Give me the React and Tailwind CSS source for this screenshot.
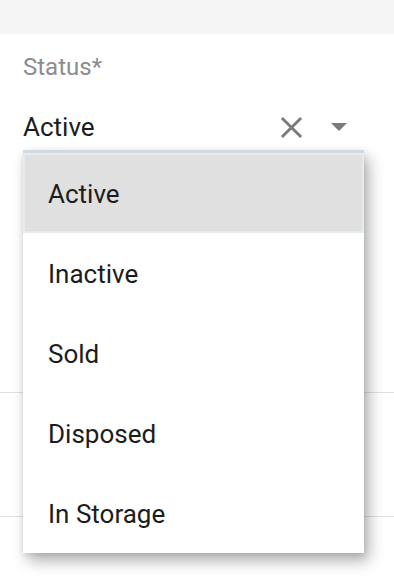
import React from "react";

export default function App() {
  const items = ["Active", "Inactive", "Sold", "Disposed", "In Storage"];
  return (
    <div
      className="relative w-[394px] h-[588px] overflow-hidden bg-white"
      style={{ fontFamily: "Roboto, 'Liberation Sans', sans-serif" }}
    >
      <div className="h-[34px] bg-[#f5f5f5]" />
      <div className="px-[23px] pt-[19px]">
        <div className="text-[24px] leading-[28px] text-[#8c8c8c]">Status*</div>
        <div className="mt-[32px] flex items-center h-[28px]">
          <span className="flex-1 text-[26px] leading-[28px] text-[#1c1c1c]">Active</span>
          <svg width="23" height="23" viewBox="0 0 24 24" className="mr-[28px]">
            <path
              d="M2 2 L22 22 M22 2 L2 22"
              stroke="#7a7a7a"
              strokeWidth="3"
              fill="none"
            />
          </svg>
          <svg width="16" height="10" viewBox="0 0 16 10" className="mr-[24px]">
            <path d="M0 1 L16 1 L8 9 Z" fill="#7a7a7a" />
          </svg>
        </div>
      </div>
      <div className="mt-[251px] h-[124px] border-t border-[#e0e0e0]" />
      <div className="border-t border-[#e0e0e0]" />

      <div className="absolute left-[23px] top-[150px] w-[341px] bg-white shadow-[5px_8px_14px_rgba(0,0,0,0.3),0_2px_6px_rgba(0,0,0,0.1)]">
        <div className="h-[3px] bg-[#d2dadf]" />
        {items.map((it, i) => (
          <div
            key={it}
            className={
              i === 0
                ? "h-[80px] flex items-center pl-[23px] pt-[2px] bg-[#e0e0e0] border-2 border-[#e4ecf0] text-[26px] text-[#1c1c1c]"
                : "h-[80px] flex items-center pl-[25px] pt-[2px] text-[26px] text-[#1c1c1c]"
            }
          >
            {it}
          </div>
        ))}
      </div>
    </div>
  );
}
